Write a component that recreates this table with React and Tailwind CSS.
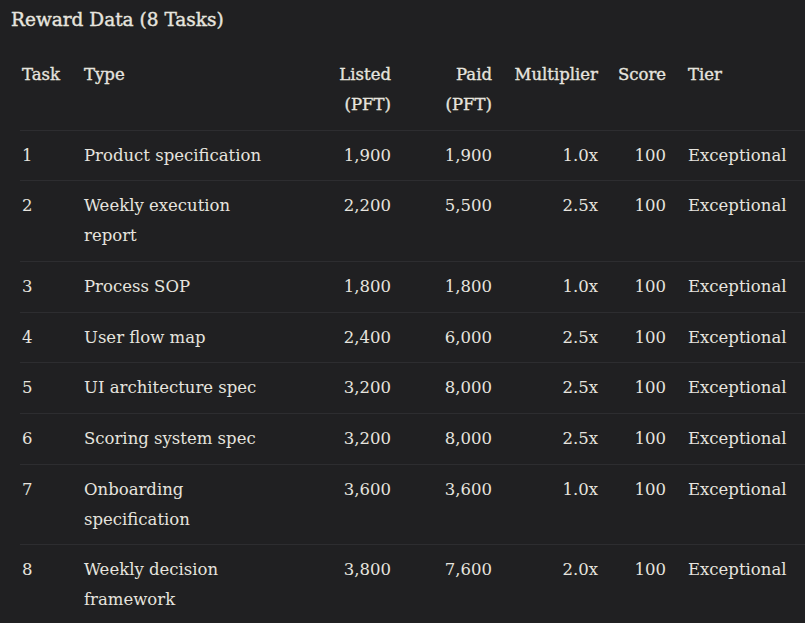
import React from 'react';

const rows = [
  { id: 1, type: 'Product specification', listed: '1,900', paid: '1,900', mult: '1.0x', score: 100, tier: 'Exceptional' },
  { id: 2, type: 'Weekly execution report', listed: '2,200', paid: '5,500', mult: '2.5x', score: 100, tier: 'Exceptional' },
  { id: 3, type: 'Process SOP', listed: '1,800', paid: '1,800', mult: '1.0x', score: 100, tier: 'Exceptional' },
  { id: 4, type: 'User flow map', listed: '2,400', paid: '6,000', mult: '2.5x', score: 100, tier: 'Exceptional' },
  { id: 5, type: 'UI architecture spec', listed: '3,200', paid: '8,000', mult: '2.5x', score: 100, tier: 'Exceptional' },
  { id: 6, type: 'Scoring system spec', listed: '3,200', paid: '8,000', mult: '2.5x', score: 100, tier: 'Exceptional' },
  { id: 7, type: 'Onboarding specification', listed: '3,600', paid: '3,600', mult: '1.0x', score: 100, tier: 'Exceptional' },
  { id: 8, type: 'Weekly decision framework', listed: '3,800', paid: '7,600', mult: '2.0x', score: 100, tier: 'Exceptional' },
];

// header cells: regular face thickened a touch (medium weight look)
const th = 'py-[10px] font-normal [-webkit-text-stroke:0.35px_currentColor]';
const td = 'py-[10px]';

const App = () => {
  return (
    <div className="min-h-screen w-full overflow-hidden bg-[#202022] text-[#e6e4df] font-['DejaVu_Serif',serif]">
      {/* TITLE */}
      <h2 className="pl-[11px] pt-[6px] mb-[16px] text-[18.5px] leading-[28px] font-normal [-webkit-text-stroke:0.4px_currentColor]">
        Reward Data (8 Tasks)
      </h2>

      {/* TABLE */}
      <table className="ml-[20px] w-[785px] table-fixed border-collapse text-[16.5px] leading-[29.75px]">
        <colgroup>
          <col className="w-[54px]" />
          <col className="w-[207px]" />
          <col className="w-[120px]" />
          <col className="w-[101px]" />
          <col className="w-[106px]" />
          <col className="w-[68px]" />
          <col className="w-[129px]" />
        </colgroup>
        <thead>
          <tr className="border-b border-[#2d2d30] align-top">
            <th className={`pl-[2px] pr-[10px] text-left ${th}`}>Task</th>
            <th className={`px-[10px] text-left ${th}`}>Type</th>
            <th className={`px-[10px] text-right ${th}`}>Listed (PFT)</th>
            <th className={`px-[10px] text-right ${th}`}>Paid (PFT)</th>
            <th className={`px-[10px] text-right ${th}`}>Multiplier</th>
            <th className={`px-[10px] text-right ${th}`}>Score</th>
            <th className={`pl-[12px] pr-[10px] text-left ${th}`}>Tier</th>
          </tr>
        </thead>
        <tbody>
          {rows.map((r) => (
            <tr key={r.id} className="border-b border-[#2d2d30] align-top">
              <td className={`pl-[2px] pr-[10px] ${td}`}>{r.id}</td>
              <td className={`px-[10px] ${td}`}>{r.type}</td>
              <td className={`px-[10px] text-right ${td}`}>{r.listed}</td>
              <td className={`px-[10px] text-right ${td}`}>{r.paid}</td>
              <td className={`px-[10px] text-right ${td}`}>{r.mult}</td>
              <td className={`px-[10px] text-right ${td}`}>{r.score}</td>
              <td className={`pl-[12px] pr-[10px] whitespace-nowrap ${td}`}>{r.tier}</td>
            </tr>
          ))}
        </tbody>
      </table>
    </div>
  );
};

export default App;
